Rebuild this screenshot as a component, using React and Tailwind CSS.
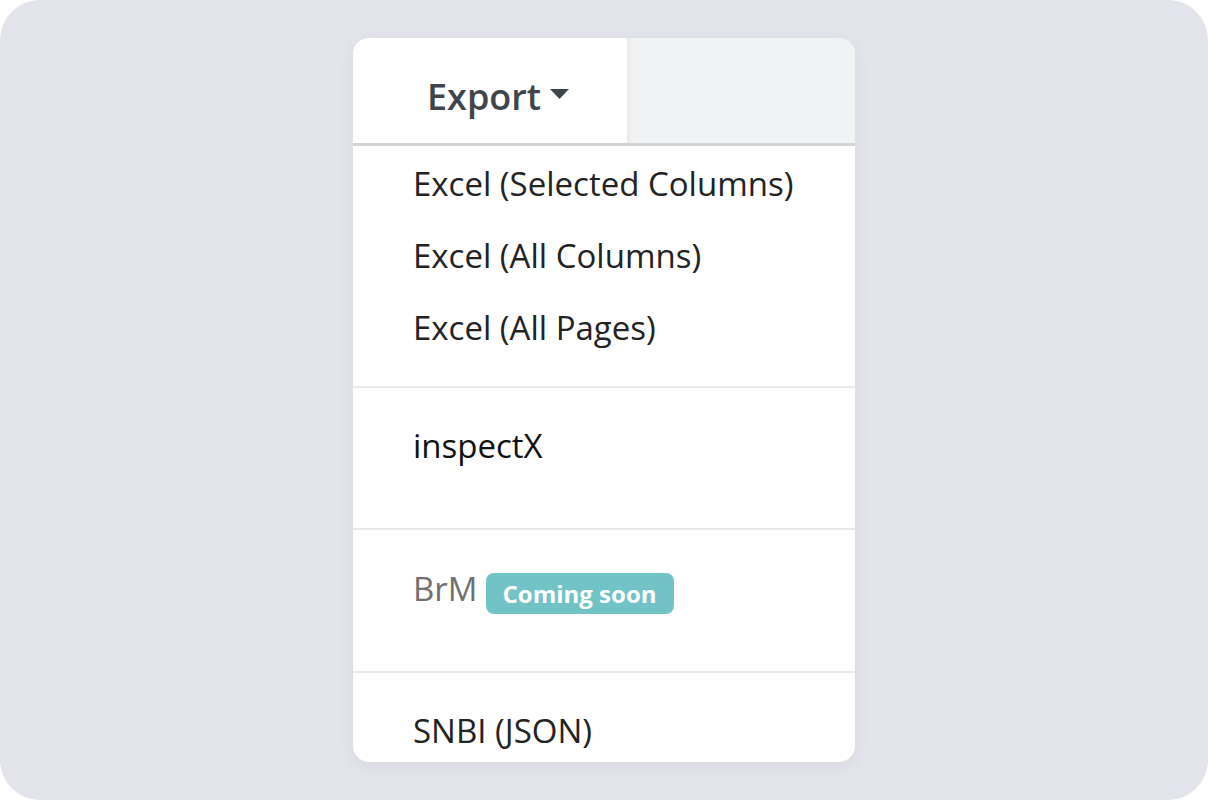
import React from "react";

function Divider() {
  return <div className="h-[2px] bg-[#e9e9eb]" />;
}

function Item({ children, className = "" }) {
  return (
    <div className={"h-[72px] flex items-center pl-[60px] text-[33px] leading-none " + className}>
      {children}
    </div>
  );
}

export default function App() {
  return (
    <div className="w-[1208px] h-[800px] bg-white" style={{ fontFamily: '"Open Sans", sans-serif' }}>
      <div className="h-full rounded-[40px] bg-[#e3e4ec] flex justify-center pt-[38px]">
        <div className="w-[502px] h-[724px] rounded-[16px] bg-white overflow-hidden shadow-[0_4px_18px_rgba(0,0,0,0.06)]">
          <div className="h-[108px] flex border-b-[3px] border-[#d2d3d5]">
            <div className="w-[274px] bg-white flex items-center pl-[74px] pt-[12px]">
              <span className="text-[36px] leading-none font-semibold text-[#40454b]">Export</span>
              <svg width="19" height="10" viewBox="0 0 19 10" className="ml-[9px] mb-[6px]">
                <path d="M0 0 L19 0 L9.5 10 Z" fill="#40454b" />
              </svg>
            </div>
            <div className="flex-1 bg-[#f1f2f4] shadow-[inset_5px_0_6px_-5px_rgba(0,0,0,0.08)]" />
          </div>
          <div className="pt-[1px] pb-[23px] text-[#232323]">
            <Item>Excel (Selected Columns)</Item>
            <Item>Excel (All Columns)</Item>
            <Item>Excel (All Pages)</Item>
          </div>
          <Divider />
          <div className="pt-[21px] pb-[47px] text-[#111]">
            <Item>inspectX</Item>
          </div>
          <Divider />
          <div className="pt-[22px] pb-[47px]">
            <Item className="text-[#707070]">
              <span>BrM</span>
              <span className="ml-[8px] mt-[11px] h-[41px] px-[17px] flex items-center rounded-[8px] bg-[#72c3c5] text-white text-[24px] font-bold leading-none">
                Coming soon
              </span>
            </Item>
          </div>
          <Divider />
          <div className="pt-[21px] text-[#232323]">
            <Item>SNBI (JSON)</Item>
          </div>
        </div>
      </div>
    </div>
  );
}
